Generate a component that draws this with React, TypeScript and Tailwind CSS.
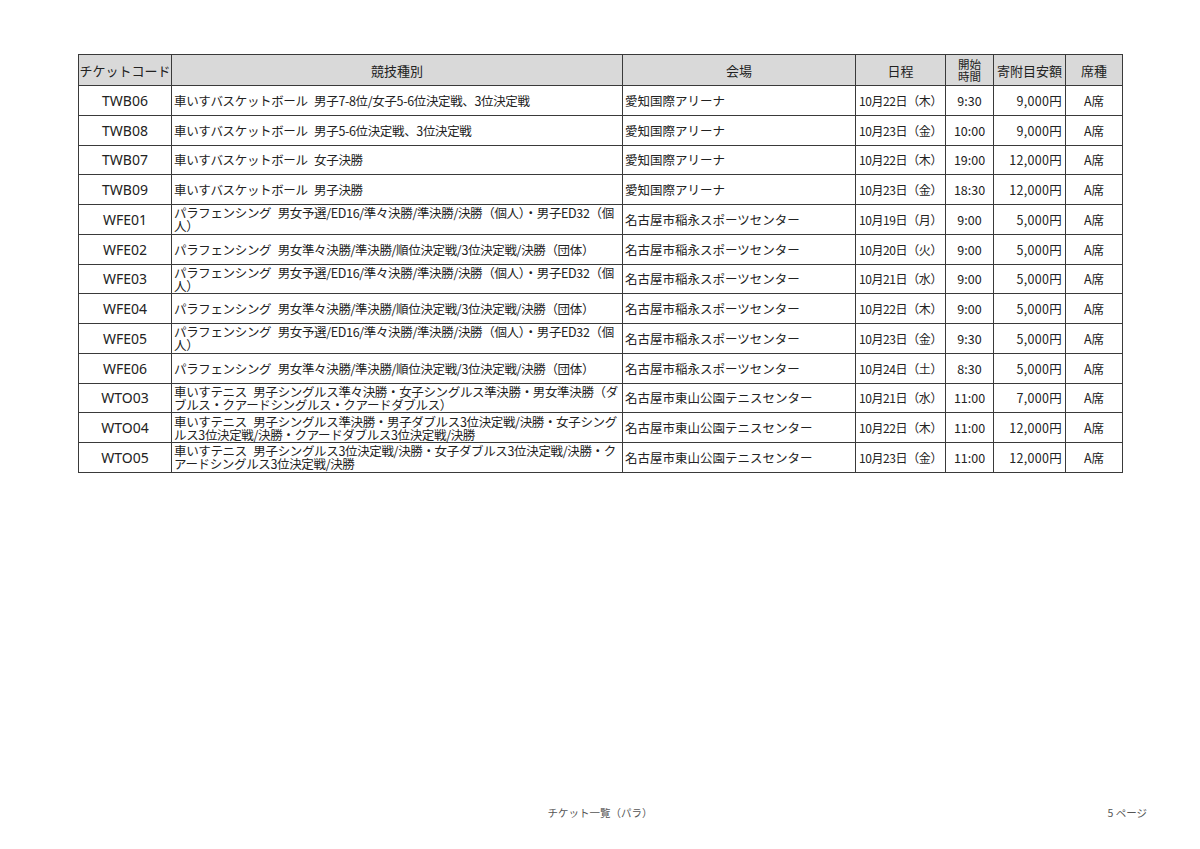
import React from 'react';

type Row = {
  code: string;
  event: string;
  venue: string;
  date: string;
  time: string;
  price: string;
};

const rows: Row[] = [
  { code: 'TWB06', event: '車いすバスケットボール 男子7-8位/女子5-6位決定戦、3位決定戦', venue: '愛知国際アリーナ', date: '10月22日（木）', time: '9:30', price: '9,000円' },
  { code: 'TWB08', event: '車いすバスケットボール 男子5-6位決定戦、3位決定戦', venue: '愛知国際アリーナ', date: '10月23日（金）', time: '10:00', price: '9,000円' },
  { code: 'TWB07', event: '車いすバスケットボール 女子決勝', venue: '愛知国際アリーナ', date: '10月22日（木）', time: '19:00', price: '12,000円' },
  { code: 'TWB09', event: '車いすバスケットボール 男子決勝', venue: '愛知国際アリーナ', date: '10月23日（金）', time: '18:30', price: '12,000円' },
  { code: 'WFE01', event: 'パラフェンシング 男女予選/ED16/準々決勝/準決勝/決勝（個人）・男子ED32（個人）', venue: '名古屋市稲永スポーツセンター', date: '10月19日（月）', time: '9:00', price: '5,000円' },
  { code: 'WFE02', event: 'パラフェンシング 男女準々決勝/準決勝/順位決定戦/3位決定戦/決勝（団体）', venue: '名古屋市稲永スポーツセンター', date: '10月20日（火）', time: '9:00', price: '5,000円' },
  { code: 'WFE03', event: 'パラフェンシング 男女予選/ED16/準々決勝/準決勝/決勝（個人）・男子ED32（個人）', venue: '名古屋市稲永スポーツセンター', date: '10月21日（水）', time: '9:00', price: '5,000円' },
  { code: 'WFE04', event: 'パラフェンシング 男女準々決勝/準決勝/順位決定戦/3位決定戦/決勝（団体）', venue: '名古屋市稲永スポーツセンター', date: '10月22日（木）', time: '9:00', price: '5,000円' },
  { code: 'WFE05', event: 'パラフェンシング 男女予選/ED16/準々決勝/準決勝/決勝（個人）・男子ED32（個人）', venue: '名古屋市稲永スポーツセンター', date: '10月23日（金）', time: '9:30', price: '5,000円' },
  { code: 'WFE06', event: 'パラフェンシング 男女準々決勝/準決勝/順位決定戦/3位決定戦/決勝（団体）', venue: '名古屋市稲永スポーツセンター', date: '10月24日（土）', time: '8:30', price: '5,000円' },
  { code: 'WTO03', event: '車いすテニス 男子シングルス準々決勝・女子シングルス準決勝・男女準決勝（ダブルス・クアードシングルス・クアードダブルス）', venue: '名古屋市東山公園テニスセンター', date: '10月21日（水）', time: '11:00', price: '7,000円' },
  { code: 'WTO04', event: '車いすテニス 男子シングルス準決勝・男子ダブルス3位決定戦/決勝・女子シングルス3位決定戦/決勝・クアードダブルス3位決定戦/決勝', venue: '名古屋市東山公園テニスセンター', date: '10月22日（木）', time: '11:00', price: '12,000円' },
  { code: 'WTO05', event: '車いすテニス 男子シングルス3位決定戦/決勝・女子ダブルス3位決定戦/決勝・クアードシングルス3位決定戦/決勝', venue: '名古屋市東山公園テニスセンター', date: '10月23日（金）', time: '11:00', price: '12,000円' },
];

const cell = 'border border-[#3a3a3a] p-0';

const App: React.FC = () => {
  return (
    <div className="w-[1200px] h-[849px] bg-white flex flex-col text-[#222] font-['Noto_Sans_CJK_JP',sans-serif]">
      <div className="pt-[54px] pl-[78px]">
        <table className="table-fixed border-collapse border border-[#222] w-[1044px]">
          <colgroup>
            <col className="w-[93px]" />
            <col className="w-[451px]" />
            <col className="w-[233px]" />
            <col className="w-[90px]" />
            <col className="w-[48px]" />
            <col className="w-[72px]" />
            <col className="w-[57px]" />
          </colgroup>
          <thead>
            <tr className="h-[31px] bg-[#d9d9d9] text-[13px] leading-[13px]">
              <th className={`${cell} font-normal`}>チケットコード</th>
              <th className={`${cell} font-normal`}>競技種別</th>
              <th className={`${cell} font-normal`}>会場</th>
              <th className={`${cell} font-normal`}>日程</th>
              <th className={`${cell} font-normal text-[11.5px] leading-[12px]`}>
                <div>開始</div>
                <div>時間</div>
              </th>
              <th className={`${cell} font-normal`}>寄附目安額</th>
              <th className={`${cell} font-normal`}>席種</th>
            </tr>
          </thead>
          <tbody>
            {rows.map((r) => (
              <tr key={r.code} className="h-[29.75px] text-[12.5px] leading-[13px]">
                <td className={`${cell} text-center text-[14px] font-['Noto_Sans',sans-serif]`}>{r.code}</td>
                <td className={`${cell} px-[2px] tracking-[-0.35px] [word-spacing:4px]`}>{r.event}</td>
                <td className={`${cell} px-[2px]`}>{r.venue}</td>
                <td className={`${cell} text-center text-[12px] tracking-[-0.4px]`}>{r.date}</td>
                <td className={`${cell} text-center`}>{r.time}</td>
                <td className={`${cell} text-right pr-[3px] tracking-[0.3px]`}>{r.price}</td>
                <td className={`${cell} text-center`}>A席</td>
              </tr>
            ))}
          </tbody>
        </table>
      </div>
      <div className="mt-auto mb-[28px] relative h-[16px] text-[10.5px] text-[#555]">
        <div className="text-center">チケット一覧（パラ）</div>
        <div className="absolute right-[53px] top-0">5 ページ</div>
      </div>
    </div>
  );
};

export default App;
